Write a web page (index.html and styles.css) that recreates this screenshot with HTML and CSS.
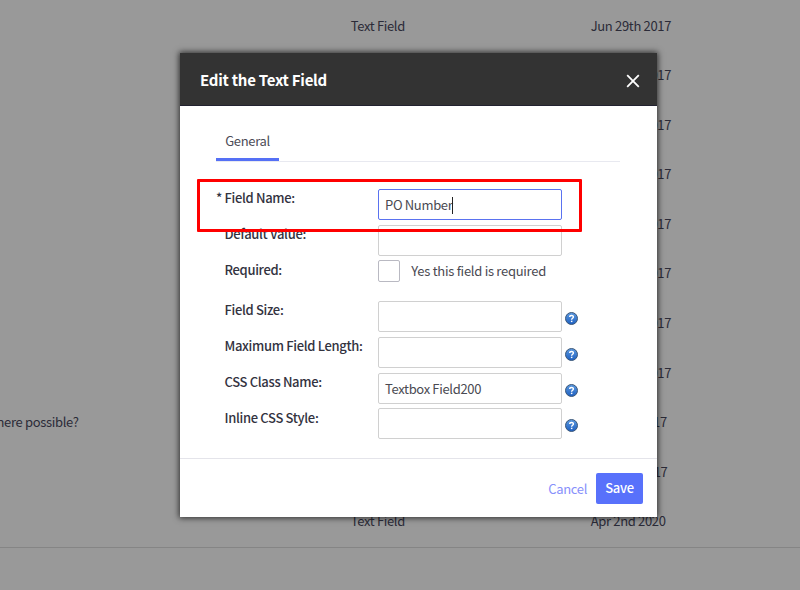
FILE: index.html
```html
<!DOCTYPE html>
<html lang="en">
<head>
<meta charset="utf-8">
<title>Edit the Text Field</title>
<link rel="stylesheet" href="styles.css">
</head>
<body>
<svg class="defs" width="0" height="0" aria-hidden="true">
  <defs>
    <linearGradient id="ball" x1="0" y1="0" x2="0" y2="1">
      <stop offset="0" stop-color="#5d9ae0"/>
      <stop offset="1" stop-color="#1d5fc0"/>
    </linearGradient>
    <symbol id="help" viewBox="0 0 13 13">
      <circle cx="6.5" cy="6.5" r="6" fill="url(#ball)" stroke="#3d5878" stroke-width="1"/>
      <path d="M4.7 5.1C4.7 2.9 8.5 3 8.4 5 8.3 6.3 6.6 6.2 6.6 7.8" fill="none" stroke="#fff" stroke-width="1.4"/>
      <path d="M5.9 8.7h1.5v1.4H5.9z" fill="#fff"/>
    </symbol>
  </defs>
</svg>
<main class="list">
  <div class="row"><span></span><span>Text Field</span><span>Jun 29th 2017</span></div>
  <div class="row"><span></span><span>Text Field</span><span>Jun 29th 2017</span></div>
  <div class="row"><span></span><span>Text Field</span><span>Jun 29th 2017</span></div>
  <div class="row"><span></span><span>Text Field</span><span>Jun 29th 2017</span></div>
  <div class="row"><span></span><span>Text Field</span><span>Jun 29th 2017</span></div>
  <div class="row"><span></span><span>Text Field</span><span>Jun 29th 2017</span></div>
  <div class="row"><span></span><span>Text Field</span><span>Jun 29th 2017</span></div>
  <div class="row"><span></span><span>Text Field</span><span>Jun 29th 2017</span></div>
  <div class="row"><span class="question">here possible?</span><span>Text Field</span><span>Jul 24th 2017</span></div>
  <div class="row"><span></span><span>Text Field</span><span class="tail">17</span></div>
  <div class="row"><span></span><span>Text Field</span><span>Apr 2nd 2020</span></div>
</main>
<section class="modal" role="dialog">
  <header class="modal-head">
    <h1>Edit the Text Field</h1>
    <svg class="close" width="14" height="14" viewBox="0 0 14 14"><path d="M1.2 1.2l11.6 11.6M12.8 1.2L1.2 12.8" stroke="#fff" stroke-width="1.8" fill="none"/></svg>
  </header>
  <div class="modal-body">
    <nav class="tabs"><span class="tab">General</span></nav>
    <div class="form">
      <div class="field"><label><span class="star">*</span>Field Name:</label><div class="input focus">PO Number<i class="caret"></i></div></div>
      <div class="field"><label>Default Value:</label><div class="input"></div></div>
      <div class="field check"><label>Required:</label><div class="box"></div><span class="note">Yes this field is required</span></div>
      <div class="field"><label>Field Size:</label><div class="input"></div><svg class="help"><use href="#help"/></svg></div>
      <div class="field"><label>Maximum Field Length:</label><div class="input"></div><svg class="help"><use href="#help"/></svg></div>
      <div class="field"><label>CSS Class Name:</label><div class="input">Textbox Field200</div><svg class="help"><use href="#help"/></svg></div>
      <div class="field"><label>Inline CSS Style:</label><div class="input"></div><svg class="help"><use href="#help"/></svg></div>
    </div>
  </div>
  <footer class="modal-foot"><span class="cancel">Cancel</span><span class="save">Save</span></footer>
</section>
<div class="highlight"></div>
</body>
</html>
```
FILE: styles.css
```css
* { box-sizing: border-box; }
body {
  margin: 0;
  width: 800px;
  height: 590px;
  overflow: hidden;
  position: relative;
  background: #999;
  color: #2b2b38;
  font: 13px/20px "Noto Sans CJK SC", sans-serif;
  letter-spacing: -.33px;
}
.defs { position: absolute; }
.list {
  height: 548px;
  padding-top: .9px;
  border-bottom: 1px solid #858585;
}
.row {
  display: grid;
  grid-template-columns: 350.7px 240px 1fr;
  align-items: center;
  height: 49.57px;
  white-space: nowrap;
}
.question { margin-left: -3.5px; }
.tail { padding-left: 63px; }
.modal {
  position: absolute;
  left: 180px;
  top: 53px;
  width: 477px;
  height: 464px;
  display: flex;
  flex-direction: column;
  background: #fff;
  box-shadow: 0 0 6px 1px rgba(0, 0, 0, .7);
}
.modal-head {
  display: flex;
  align-items: center;
  justify-content: space-between;
  height: 53px;
  padding: 0 17px 0 20px;
  background: #333;
  border-bottom: 1px solid #222230;
}
h1 { margin: 1px 0 0; font-size: 15px; font-weight: 700; color: #fff; letter-spacing: -.25px; }
.close { margin-top: 3px; }
.modal-body { flex: 1; padding: 20px 37px 0 36px; }
.tabs { display: flex; height: 36px; border-bottom: 1px solid #e8e9f0; }
.tab {
  height: 35px;
  width: 63px;
  padding-top: 5px;
  text-align: center;
  color: #4c4c56;
  border-bottom: 3px solid #5570f5;
}
.form { padding-top: 27px; }
.field { display: flex; height: 35.8px; }
.field label {
  position: relative;
  width: 162px;
  margin-top: -.7px;
  padding-left: 8.5px;
  font-weight: 500;
  color: #33333f;
  white-space: nowrap;
}
.star { position: absolute; left: 0; }
.input {
  display: flex;
  align-items: center;
  width: 183.5px;
  height: 31px;
  padding: 1.5px 0 0 6px;
  border: 1px solid #d0d0d0;
  border-radius: 2px;
  color: #4a4a52;
}
.focus { border-color: #5a72f0; }
.caret { width: 1px; height: 17px; background: #222; }
.check { height: 40.5px; }
.field .box { width: 22px; height: 22px; margin-top: -1px; border: 1px solid #b9b9c2; border-radius: 2px; }
.note { margin: .3px 0 0 11.3px; color: #4a4a52; letter-spacing: -.28px; }
.help { width: 13px; height: 13px; margin: 11px 0 0 3.5px; }
.modal-foot {
  display: flex;
  align-items: center;
  justify-content: flex-end;
  gap: 9px;
  height: 59px;
  padding-right: 14px;
  border-top: 1px solid #e4e4ea;
}
.cancel { padding-top: 2px; color: #8790fb; }
.save {
  width: 47px;
  height: 31px;
  line-height: 30px;
  text-align: center;
  font-weight: 500;
  color: #fff;
  background: #5871fb;
  border-radius: 2px;
}
.highlight {
  position: absolute;
  left: 197px;
  top: 179px;
  width: 385px;
  height: 53px;
  border: 3px solid #f00;
  border-radius: 1px;
}
```
